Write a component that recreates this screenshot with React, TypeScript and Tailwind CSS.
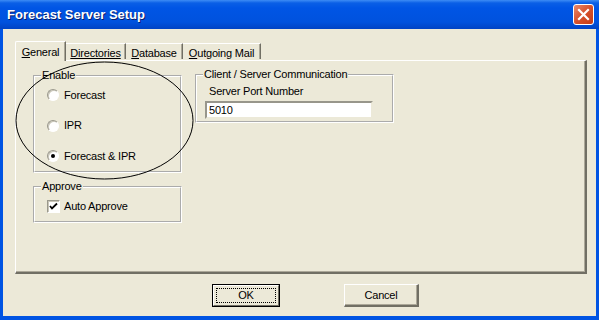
import { ReactNode } from "react";

const Radio = ({ label, checked }: { label: string; checked?: boolean }) => (
  <div className="flex items-center h-[16px]">
    <span className="relative w-[12px] h-[12px] rounded-full bg-white border border-t-[#9a988c] border-l-[#9a988c] border-b-white border-r-white shadow-[inset_1px_1px_0_#c9c6b8]">
      {checked && (
        <span className="absolute left-[3px] top-[3px] w-[4px] h-[4px] rounded-full bg-black" />
      )}
    </span>
    <span className="ml-[5px]">{label}</span>
  </div>
);

const Group = ({
  legend,
  className,
  children,
}: {
  legend: string;
  className: string;
  children?: ReactNode;
}) => (
  <fieldset
    className={"border-2 [border-style:groove] border-white " + className}
  >
    <legend className="ml-[6px] px-[1px] leading-[13px]">{legend}</legend>
    {children}
  </fieldset>
);

const Tab = ({
  active,
  width,
  children,
}: {
  active?: boolean;
  width: string;
  children: ReactNode;
}) =>
  active ? (
    <div
      className={
        "relative z-10 -mb-px h-[20px] bg-[#ece9d8] border-l border-t border-white rounded-tl-[2px] border-r border-r-[#716f64] shadow-[inset_-1px_0_0_#aca899] flex items-start justify-center pt-[2px] " +
        width
      }
    >
      {children}
    </div>
  ) : (
    <div
      className={
        "mt-[2px] h-[16px] bg-[#ece9d8] border-t border-white border-r border-r-[#716f64] shadow-[inset_-1px_0_0_#aca899] flex items-start justify-center pt-[1px] " +
        width
      }
    >
      {children}
    </div>
  );

export default function App() {
  return (
    <div className="relative w-[599px] h-[320px] flex flex-col bg-[#0054e3] overflow-hidden font-['Liberation_Sans',Arial,sans-serif] text-[11px] tracking-[-0.2px] text-black">
      <div className="h-[29px] shrink-0 flex items-center justify-between pl-[7px] pr-[5px] bg-[linear-gradient(180deg,#3d8cf5_0px,#0a5fe6_3px,#0055e5_8px,#0052de_22px,#0043c4_29px)]">
        <span className="text-white font-bold text-[13px] tracking-normal [text-shadow:1px_1px_0_#0a1e6a]">
          Forecast Server Setup
        </span>
        <div className="w-[21px] h-[21px] rounded-[3px] border border-white bg-[linear-gradient(135deg,#e98a6c,#d6512c_50%,#c33a16)] flex items-center justify-center">
          <svg width="13" height="13" viewBox="0 0 13 13">
            <path
              d="M2 2 L11 11 M11 2 L2 11"
              stroke="white"
              strokeWidth="2.2"
              strokeLinecap="square"
            />
          </svg>
        </div>
      </div>

      <div className="flex-1 mx-[3px] mb-[4px] bg-[#ece9d8] flex flex-col">
        <div className="flex pt-[12px] pl-[12px]">
          <Tab active width="w-[51px]">
            <span>
              <u>G</u>eneral
            </span>
          </Tab>
          <Tab width="w-[60px]">
            <u>Directories</u>
          </Tab>
          <Tab width="w-[57px]">
            <span>
              <u>D</u>atabase
            </span>
          </Tab>
          <Tab width="w-[78px]">
            <span>
              <u>O</u>utgoing Mail
            </span>
          </Tab>
        </div>

        <div className="ml-[12px] w-[572px] h-[214px] border-l border-t border-white border-r-2 border-b-2 border-r-[#716f64] border-b-[#716f64] shadow-[inset_-1px_-1px_0_#aca899] flex pl-[17px] pt-[8px]">
          <div className="w-[149px] flex flex-col">
            <Group legend="Enable" className="h-[104px]">
              <div className="flex flex-col gap-[14.5px] pl-[12px] pt-[5px]">
                <Radio label="Forecast" />
                <Radio label="IPR" />
                <Radio label="Forecast & IPR" checked />
              </div>
            </Group>
            <Group legend="Approve" className="mt-[7px] h-[43px]">
              <div className="flex items-center h-[16px] pl-[12px] mt-[5px]">
                <span className="relative w-[13px] h-[13px] bg-white border border-t-[#9a988c] border-l-[#9a988c] border-b-white border-r-white shadow-[inset_1px_1px_0_#c9c6b8] flex items-center justify-center">
                  <svg width="9" height="9" viewBox="0 0 9 9">
                    <path
                      d="M1 4 L3 6.5 L8 1.5"
                      stroke="black"
                      strokeWidth="1.8"
                      fill="none"
                    />
                  </svg>
                </span>
                <span className="ml-[4px]">Auto Approve</span>
              </div>
            </Group>
          </div>

          <div className="ml-[13px] -mt-[1px]">
            <Group
              legend="Client / Server Communication"
              className="w-[199px] h-[55px]"
            >
              <div className="pl-[12px] leading-[13px] mt-[4px]">
                Server Port Number
              </div>
              <div className="mt-[3px] ml-[8px] w-[168px] h-[18px] bg-white border-2 [border-style:inset] border-[#ece9d8] flex items-center pl-[2px]">
                5010
              </div>
            </Group>
          </div>
        </div>

        <div className="flex mt-[10px] pl-[209px]">
          <div className="w-[68px] h-[23px] border border-black flex">
            <div className="flex-1 border-l border-t border-white border-r border-b border-r-[#716f64] border-b-[#716f64] flex items-center justify-center p-[2px]">
              <div className="w-full h-full border border-dotted border-black flex items-center justify-center">
                OK
              </div>
            </div>
          </div>
          <div className="ml-[64px] w-[75px] h-[23px] border-l border-t border-white border-r-2 border-b-2 border-r-[#716f64] border-b-[#716f64] shadow-[inset_-1px_-1px_0_#aca899] flex items-center justify-center">
            Cancel
          </div>
        </div>
      </div>

      <svg
        className="absolute left-[15px] top-[61px] pointer-events-none"
        width="179"
        height="120"
        viewBox="0 0 179 120"
      >
        <ellipse
          cx="89.5"
          cy="59.5"
          rx="88.5"
          ry="58.5"
          fill="none"
          stroke="black"
          strokeWidth="1"
        />
      </svg>
    </div>
  );
}
